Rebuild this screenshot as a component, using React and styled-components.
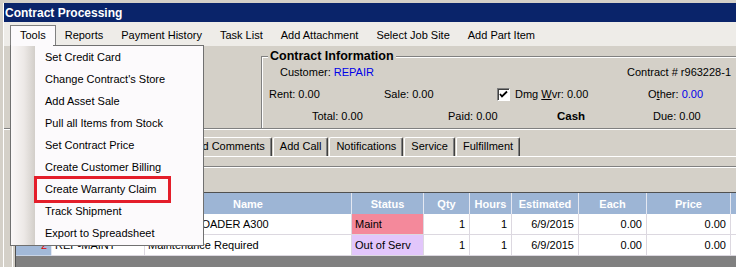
import React from 'react';
import styled, { createGlobalStyle } from 'styled-components';

const Global = createGlobalStyle`
  html, body { margin: 0; padding: 0; background: #d4d0c8; }
  body {
    font-family: "Liberation Sans", Arial, sans-serif;
    font-size: 11px;
    color: #000;
  }
`;

const Window = styled.div`
  position: relative;
  width: 736px;
  height: 267px;
  overflow: hidden;
  background: #d4d0c8;
  padding: 3px 0 0 3px;
  box-sizing: border-box;
`;

const Inner = styled.div`
  height: 100%;
  border-left: 1px solid #ffffff;
  display: flex;
  flex-direction: column;
`;

const TitleBar = styled.div`
  height: 19px;
  flex: none;
  background: #0a246a;
  color: #ffffff;
  font-weight: bold;
  font-size: 12px;
  display: flex;
  align-items: center;
  padding-left: 1px;
`;

const MenuBar = styled.div`
  height: 24px;
  flex: none;
  box-sizing: border-box;
  background: #eeece8;
  display: flex;
  align-items: flex-start;
  padding: 3px 0 0 6px;
`;

const MenuItem = styled.div`
  height: 20px;
  box-sizing: border-box;
  line-height: 19px;
  padding: 0 ${p => (p.$open ? 9 : 8)}px;
  border: 1px solid ${p => (p.$open ? '#808080' : 'transparent')};
  border-bottom: none;
  background: ${p => (p.$open ? '#fcfafc' : 'transparent')};
  white-space: nowrap;
`;

const Body = styled.div`
  flex: 1;
  min-height: 0;
  display: flex;
  flex-direction: column;
`;

const InfoArea = styled.div`
  padding: 10px 0 0 257px;
  flex: none;
`;

const GroupBox = styled.div`
  position: relative;
  width: 479px;
  height: 72px;
  box-sizing: border-box;
  border-top: 1px solid #808080;
  border-left: 1px solid #808080;
  box-shadow: inset 1px 1px 0 #ffffff;
  padding-top: 4px;
`;

const Legend = styled.span`
  position: absolute;
  top: -8px;
  left: 6px;
  padding: 0 2px;
  background: #d4d0c8;
  font-weight: bold;
  font-size: 12.5px;
  line-height: 14px;
`;

const InfoRow = styled.div`
  height: 22px;
  display: grid;
  grid-template-columns: ${p => p.$cols};
  align-items: center;
  padding-left: ${p => p.$pad}px;
  white-space: nowrap;
`;

const SplitRow = styled.div`
  height: 22px;
  display: flex;
  align-items: center;
  justify-content: space-between;
  padding: 0 9px 0 18px;
  white-space: nowrap;
`;

const Blue = styled.span`
  color: #0000e8;
`;

const Strong = styled.span`
  font-weight: bold;
  font-size: 11.5px;
`;

const CheckBox = styled.span`
  width: 13px;
  height: 13px;
  box-sizing: border-box;
  background: #ffffff;
  border-top: 1px solid #808080;
  border-left: 1px solid #808080;
  border-right: 1px solid #ffffff;
  border-bottom: 1px solid #ffffff;
  box-shadow: inset 1px 1px 0 #404040;
  display: flex;
  align-items: center;
  justify-content: center;
`;

const Separator = styled.div`
  flex: none;
  border-top: 1px solid #808080;
  border-bottom: 1px solid #ffffff;
`;

const TabArea = styled.div`
  flex: 1;
  min-height: 0;
  display: flex;
  flex-direction: column;
  padding: 7px 0 0 8px;
`;

const TabStrip = styled.div`
  height: 19px;
  flex: none;
  display: flex;
  align-items: flex-end;
  padding-left: 2px;
`;

const Tab = styled.div`
  height: 19px;
  box-sizing: border-box;
  ${p => (p.$w ? `width: ${p.$w}px;` : '')}
  padding: 0 6px;
  line-height: 17px;
  border-top: 1px solid #ffffff;
  border-left: 1px solid #ffffff;
  border-right: 1px solid #404040;
  box-shadow: inset -1px 0 0 #808080;
  border-radius: 2px 2px 0 0;
  margin-right: 1px;
  white-space: nowrap;
`;

const Panel = styled.div`
  flex: 1;
  min-height: 0;
  display: flex;
  flex-direction: column;
  border-top: 1px solid #ffffff;
  border-left: 1px solid #ffffff;
`;

const PanelBar = styled.div`
  height: 9px;
  flex: none;
  border-bottom: 1px solid #808080;
  box-shadow: 0 1px 0 #ffffff;
`;

const PanelGap = styled.div`
  height: 25px;
  flex: none;
`;

const Grid = styled.div`
  flex: 1;
  margin-left: 2px;
  background: #808080;
  border-top: 1px solid #505050;
  border-left: 1px solid #505050;
`;

const COLS = '36px 93px 207px 72px 46px 42px 67px 68px 84px 120px';

const GridRow = styled.div`
  display: grid;
  grid-template-columns: ${COLS};
  height: 21px;
`;

const HeadCell = styled.div`
  background: #9db5d5;
  color: #ffffff;
  font-weight: bold;
  display: flex;
  align-items: center;
  justify-content: center;
  border-right: 1px solid #e4e8f2;
  box-sizing: border-box;
`;

const RowHead = styled.div`
  background: #a2b9d8;
  color: #e00000;
  display: flex;
  align-items: center;
  justify-content: flex-end;
  padding-right: 4px;
  border-right: 1px solid #e4e8f2;
  border-bottom: 1px solid #c8d4e6;
  box-sizing: border-box;
`;

const tones = {
  plain: '#ffffff',
  maint: '#f4899b',
  oos: '#e2c6fb',
};

const Cell = styled.div`
  background: ${p => tones[p.$tone || 'plain']};
  display: flex;
  align-items: center;
  justify-content: ${p => (p.$right ? 'flex-end' : 'flex-start')};
  padding: 0 4px 0 3px;
  border-right: 1px solid #dcd8e0;
  border-bottom: 1px solid #dcd8e0;
  box-sizing: border-box;
  white-space: nowrap;
  overflow: hidden;
`;

const Dropdown = styled.div`
  position: absolute;
  left: 10px;
  top: 45px;
  width: 194px;
  height: 201px;
  box-sizing: border-box;
  border: 1px solid #707070;
  background: #fcfafc;
  display: flex;
  &::before {
    content: '';
    position: absolute;
    top: -1px;
    left: 0;
    width: 42px;
    height: 1px;
    background: #fcfafc;
  }
`;

const DropStrip = styled.div`
  width: 24px;
  flex: none;
  background: linear-gradient(to right, #fbf8f8 0%, #ece8e6 55%, #d2cec9 100%);
`;

const DropList = styled.div`
  flex: 1;
  display: flex;
  flex-direction: column;
`;

const DropItem = styled.div`
  height: 22px;
  line-height: 22px;
  padding-left: 10px;
  white-space: nowrap;
`;

const Callout = styled.div`
  position: absolute;
  left: 34px;
  top: 176px;
  width: 137px;
  height: 27px;
  box-sizing: border-box;
  border: 3px solid #e41e2a;
`;

const menus = ['Tools', 'Reports', 'Payment History', 'Task List', 'Add Attachment', 'Select Job Site', 'Add Part Item'];
const tools = [
  'Set Credit Card',
  "Change Contract's Store",
  'Add Asset Sale',
  'Pull all Items from Stock',
  'Set Contract Price',
  'Create Customer Billing',
  'Create Warranty Claim',
  'Track Shipment',
  'Export to Spreadsheet',
];
const headers = ['', '', 'Name', 'Status', 'Qty', 'Hours', 'Estimated', 'Each', 'Price', ''];
const rows = [
  { n: '', code: '', name: 'BOBCAT LOADER A300', status: 'Maint', tone: 'maint' },
  { n: '2', code: 'REP-MAINT', name: 'Maintenance Required', status: 'Out of Serv', tone: 'oos' },
];

function Check() {
  return (
    <svg width="9" height="9" viewBox="0 0 9 9">
      <path d="M1 4 L3 6.5 L8 1.5" stroke="#000" strokeWidth="1.8" fill="none" />
    </svg>
  );
}

export default function App() {
  return (
    <>
      <Global />
      <Window>
        <Inner>
          <TitleBar>Contract Processing</TitleBar>
          <MenuBar>
            {menus.map((m, i) => (
              <MenuItem key={m} $open={i === 0}>{m}</MenuItem>
            ))}
          </MenuBar>
          <Body>
            <InfoArea>
              <GroupBox>
                <Legend>Contract Information</Legend>
                <SplitRow>
                  <span>Customer: <Blue>REPAIR</Blue></span>
                  <span>Contract # r963228-1</span>
                </SplitRow>
                <InfoRow $pad={7} $cols="115px 113px 18px 133px auto">
                  <span>Rent: 0.00</span>
                  <span>Sale: 0.00</span>
                  <CheckBox><Check /></CheckBox>
                  <span>Dmg <u>W</u>vr: 0.00</span>
                  <span>O<u>t</u>her: <Blue>0.00</Blue></span>
                </InfoRow>
                <InfoRow $pad={50} $cols="136px 109px 96px auto">
                  <span>Total: 0.00</span>
                  <span>Paid: 0.00</span>
                  <Strong>Cash</Strong>
                  <span>Due: 0.00</span>
                </InfoRow>
              </GroupBox>
            </InfoArea>
            <Separator />
            <TabArea>
              <TabStrip>
                <Tab $w={80} />
                <Tab $w={86} />
                <Tab>Add Comments</Tab>
                <Tab>Add Call</Tab>
                <Tab>Notifications</Tab>
                <Tab>Service</Tab>
                <Tab>Fulfillment</Tab>
              </TabStrip>
              <Panel>
                <PanelBar />
                <PanelGap />
                <Grid>
                  <GridRow>
                    {headers.map((h, i) => (
                      <HeadCell key={i}>{h}</HeadCell>
                    ))}
                  </GridRow>
                  {rows.map(r => (
                    <GridRow key={r.name}>
                      <RowHead>{r.n}</RowHead>
                      <Cell>{r.code}</Cell>
                      <Cell>{r.name}</Cell>
                      <Cell $tone={r.tone}>{r.status}</Cell>
                      <Cell $right>1</Cell>
                      <Cell $right>1</Cell>
                      <Cell $right>6/9/2015</Cell>
                      <Cell $right>0.00</Cell>
                      <Cell $right>0.00</Cell>
                      <Cell />
                    </GridRow>
                  ))}
                </Grid>
              </Panel>
            </TabArea>
          </Body>
        </Inner>
        <Dropdown>
          <DropStrip />
          <DropList>
            {tools.map(t => (
              <DropItem key={t}>{t}</DropItem>
            ))}
          </DropList>
        </Dropdown>
        <Callout />
      </Window>
    </>
  );
}
